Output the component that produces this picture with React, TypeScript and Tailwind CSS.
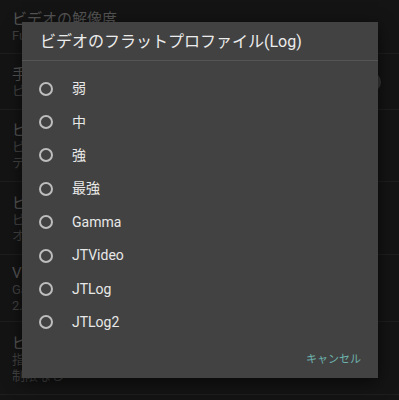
import React from "react";

const font = "font-['Roboto','Noto_Sans_CJK_JP',sans-serif]";

export default function App() {
  const rows = [
    { h: "h-[54px]", lines: ["ビデオの解像度", "Full HD (1920x1080)"] },
    { h: "h-[56px]", lines: ["手ぶれ補正", "ビデオ撮影時に手ぶれを補正します"], toggle: true },
    { h: "h-[72px]", lines: ["ビデオのビットレート", "ビデオのビットレートを指定します", "デフォルト"] },
    { h: "h-[73px]", lines: ["ビデオのフレームレート", "ビデオのフレームレートを指定します", "オート"] },
    { h: "h-[67px]", lines: ["Video picture profiles", "Gamma", "2.2"] },
    { h: "h-[73px]", lines: ["ビデオの最大時間", "指定時間後に録画を停止します", "制限なし"] },
  ];

  const options = ["弱", "中", "強", "最強", "Gamma", "JTVideo", "JTLog", "JTLog2"];

  return (
    <div className={`relative w-[399px] h-[400px] overflow-hidden bg-[#141414] ${font}`}>
      {/* dimmed settings list behind the dialog */}
      <div className="flex flex-col">
        {rows.map((r, i) => (
          <div key={i} className={`${r.h} relative flex flex-col justify-center px-3 pt-[2px] border-b border-[#1e1e1e]`}>
            {r.lines.map((t, j) => (
              <div
                key={j}
                className={j === 0 ? "text-[15px] leading-[17px] text-[#555555]" : "text-[13px] leading-[16px] text-[#424242]"}
              >
                {t}
              </div>
            ))}
            {r.toggle && <div className="absolute right-[18px] top-[18px] w-[20px] h-[20px] rounded-full bg-[#383838]" />}
          </div>
        ))}
      </div>

      {/* dialog */}
      <div className="absolute left-[22px] top-[22px] w-[356px] h-[356px] bg-[#424242] shadow-[0_4px_16px_rgba(0,0,0,0.6)] flex flex-col">
        <div className="h-[39px] flex items-center px-[18px] pt-[2px] text-[16px] text-[#ececec] border-b border-[#555555]">
          ビデオのフラットプロファイル(Log)
        </div>
        <div className="flex flex-col pt-[11px]">
          {options.map((o) => (
            <div key={o} className="h-[33.4px] flex items-center">
              <div className="ml-[17px] w-[14px] h-[14px] rounded-full border-2 border-[#bdbdbd]" />
              <div className="ml-[19px] text-[14px] text-[#e8e8e8]">{o}</div>
            </div>
          ))}
        </div>
        <div className="flex justify-end pr-[17px] mt-[13px]">
          <span className="text-[11px] text-[#6db3ae]">キャンセル</span>
        </div>
      </div>
    </div>
  );
}
